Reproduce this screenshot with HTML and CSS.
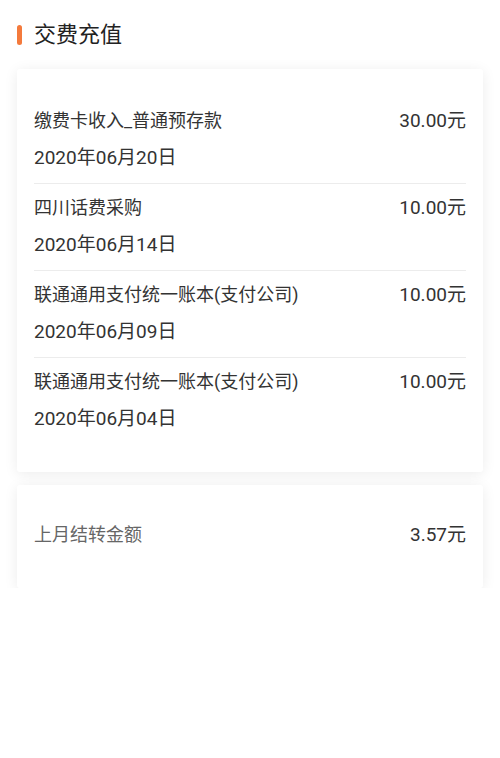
FILE: index.html
```html
<!DOCTYPE html>
<html lang="zh-CN">
<head>
<meta charset="utf-8">
<title>交费充值</title>
<link rel="stylesheet" href="styles.css">
</head>
<body>
<div class="page">
  <div class="header">
    <span class="bar"></span>
    <span class="title">交费充值</span>
  </div>
  <div class="card list">
    <div class="row">
      <div class="info">
        <div class="name">缴费卡收入_普通预存款</div>
        <div class="date">2020年06月20日</div>
      </div>
      <div class="amount">30.00元</div>
    </div>
    <div class="row">
      <div class="info">
        <div class="name">四川话费采购</div>
        <div class="date">2020年06月14日</div>
      </div>
      <div class="amount">10.00元</div>
    </div>
    <div class="row">
      <div class="info">
        <div class="name">联通通用支付统一账本(支付公司)</div>
        <div class="date">2020年06月09日</div>
      </div>
      <div class="amount">10.00元</div>
    </div>
    <div class="row">
      <div class="info">
        <div class="name">联通通用支付统一账本(支付公司)</div>
        <div class="date">2020年06月04日</div>
      </div>
      <div class="amount">10.00元</div>
    </div>
  </div>
  <div class="card summary">
    <span class="label">上月结转金额</span>
    <span class="value">3.57元</span>
  </div>
</div>
</body>
</html>
```

FILE: styles.css
```css
html, body {
  margin: 0;
  padding: 0;
  background: #ffffff;
}
body {
  font-family: Roboto, "Noto Sans CJK SC", "Noto Sans", sans-serif;
  color: #333333;
}
.page {
  padding: 15px 17px 0 17px;
}
.header {
  height: 40px;
  display: flex;
  align-items: center;
  gap: 12px;
}
.bar {
  width: 5px;
  height: 20px;
  border-radius: 3px;
  background: #f47a3c;
}
.title {
  font-size: 22px;
  line-height: 40px;
  color: #222222;
}
.card {
  background: #ffffff;
  border-radius: 3px;
  box-shadow: 0 2px 14px rgba(0, 0, 0, 0.08);
}
.list {
  margin-top: 14px;
  padding: 28px 17px 28px 17px;
}
.row {
  display: flex;
  justify-content: space-between;
  align-items: flex-start;
  padding: 12px 0 13px 0;
  border-bottom: 1px solid #ececec;
}
.row:last-child {
  border-bottom: none;
}
.info {
  display: flex;
  flex-direction: column;
  gap: 13px;
}
.name {
  font-size: 18px;
  line-height: 24px;
  color: #333333;
}
.date, .amount {
  font-size: 19px;
  line-height: 24px;
  color: #333333;
}
.summary {
  margin-top: 13px;
  height: 103px;
  padding: 0 17px 3px 17px;
  display: flex;
  align-items: center;
  justify-content: space-between;
  box-sizing: border-box;
}
.label {
  font-size: 18px;
  line-height: 24px;
  color: #666666;
}
.value {
  font-size: 19px;
  line-height: 24px;
  color: #333333;
}
```
